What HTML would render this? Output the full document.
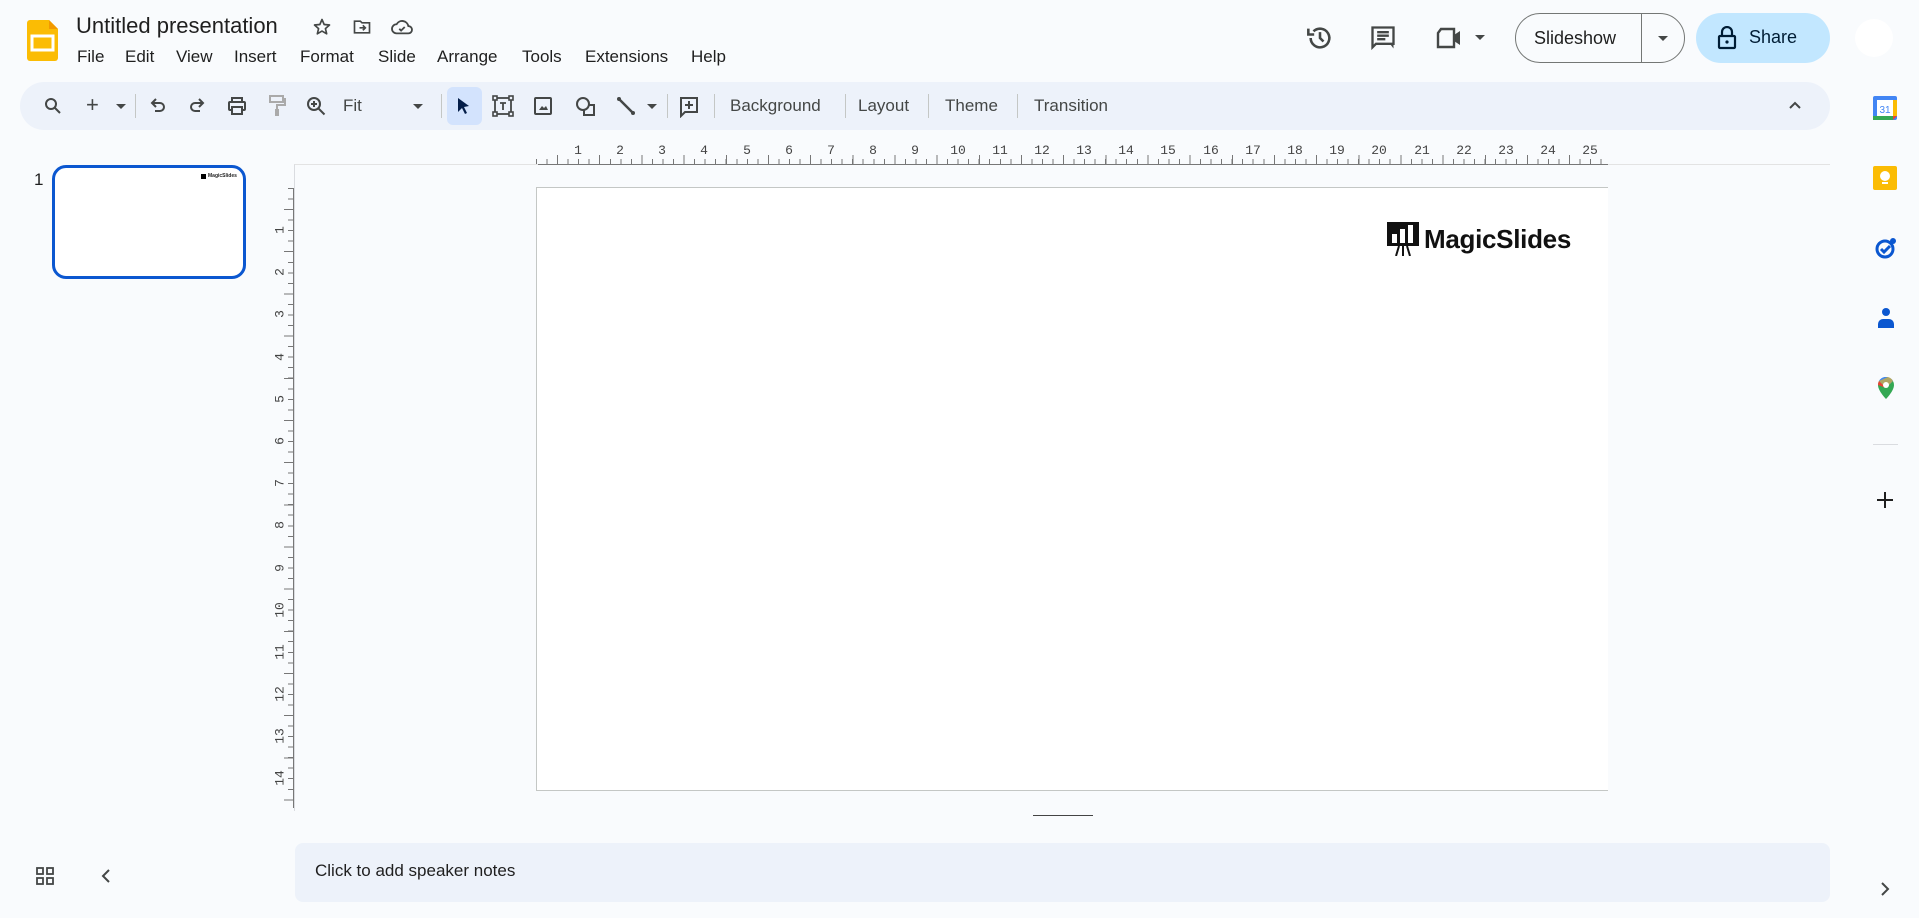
<!DOCTYPE html>
<html><head><meta charset="utf-8"><style>
*{margin:0;padding:0;box-sizing:border-box}
body{width:1919px;height:918px;background:#f9fbfd;font-family:"Liberation Sans",Arial,sans-serif;color:#1f1f1f;position:relative;overflow:hidden}
.a{position:absolute}
.menu span{position:absolute;top:47px;font-size:17px;color:#1f1f1f}
.tb{left:20px;top:82px;width:1810px;height:48px;background:#edf2fa;border-radius:24px}
.tbt{position:absolute;top:96px;font-size:17px;color:#444746}
.sep{position:absolute;top:94px;width:1px;height:24px;background:#c4c7c5}
.ic{position:absolute}
.hn{position:absolute;top:143px;font-family:"Liberation Mono",monospace;font-size:13px;color:#444;transform:translateX(-50%)}
.vn{position:absolute;left:276px;font-family:"Liberation Mono",monospace;font-size:13px;color:#444;transform:translateY(-50%) rotate(-90deg)}
</style></head><body>
<!-- logo -->
<svg class="a" style="left:27px;top:20px" width="31" height="41" viewBox="0 0 31 41"><path d="M3 0h19l9 9v29a3 3 0 0 1-3 3H3a3 3 0 0 1-3-3V3a3 3 0 0 1 3-3z" fill="#fbbc04"/><path d="M22 0l9 9h-9z" fill="#f29900"/><rect x="5" y="16" width="21" height="14" fill="none" stroke="#fff" stroke-width="3"/></svg>
<div class="a" style="left:76px;top:13px;font-size:22px;color:#1f1f1f">Untitled presentation</div>
<svg class="a" style="left:312px;top:17px" width="20" height="20" viewBox="0 0 24 24"><path d="M12 3l2.6 6 6.4.6-4.9 4.3 1.5 6.3L12 16.9 6.4 20.2l1.5-6.3L3 9.6 9.4 9z" fill="none" stroke="#444746" stroke-width="2" stroke-linejoin="round"/></svg>
<svg class="a" style="left:352px;top:17px" width="20" height="20" viewBox="0 0 24 24"><path d="M3 5h7l2 2h9v12H3z" fill="none" stroke="#444746" stroke-width="2"/><path d="M9 13h7m-3-3l3 3-3 3" fill="none" stroke="#444746" stroke-width="2"/></svg>
<svg class="a" style="left:391px;top:17px" width="22" height="20" viewBox="0 0 24 22"><path d="M6 18a5 5 0 0 1 0-10 7 7 0 0 1 13 2 4 4 0 0 1 0 8z" fill="none" stroke="#444746" stroke-width="2"/><path d="M9 13l2 2 4-4" fill="none" stroke="#444746" stroke-width="2"/></svg>
<div class="menu">
<span style="left:77px">File</span><span style="left:125px">Edit</span><span style="left:176px">View</span><span style="left:234px">Insert</span><span style="left:300px">Format</span><span style="left:378px">Slide</span><span style="left:437px">Arrange</span><span style="left:522px">Tools</span><span style="left:585px">Extensions</span><span style="left:691px">Help</span>
</div>
<!-- top right -->
<svg class="a" style="left:1306px;top:24px" width="28" height="28" viewBox="0 0 24 24"><path d="M4 12a8 8 0 1 0 2.4-5.7" fill="none" stroke="#444746" stroke-width="2.2"/><path d="M2 4v5h5" fill="none" stroke="#444746" stroke-width="2.2"/><path d="M12 7v5l3 3" fill="none" stroke="#444746" stroke-width="2.2"/></svg>
<svg class="a" style="left:1369px;top:24px" width="28" height="28" viewBox="0 0 24 24"><path d="M3 3h18v14H6l-3 3z" fill="none" stroke="#444746" stroke-width="2"/><path d="M7 7h10M7 10h10M7 13h7" stroke="#444746" stroke-width="2"/><path d="M18 17h3v4z" fill="#444746"/></svg>
<svg class="a" style="left:1435px;top:25px" width="30" height="26" viewBox="0 0 30 26"><path d="M6 4h13v18H3V8z" fill="none" stroke="#444746" stroke-width="2.4"/><path d="M19 10l6-4v14l-6-4z" fill="#444746"/></svg>
<div class="a" style="left:1475px;top:35px;border-left:5px solid transparent;border-right:5px solid transparent;border-top:5px solid #444746"></div>
<div class="a" style="left:1515px;top:13px;width:170px;height:50px;border:1px solid #747775;border-radius:25px"></div>
<div class="a" style="left:1641px;top:13px;width:1px;height:50px;background:#747775"></div>
<div class="a" style="left:1534px;top:28px;font-size:18px;color:#1f1f1f">Slideshow</div>
<div class="a" style="left:1658px;top:36px;border-left:5px solid transparent;border-right:5px solid transparent;border-top:5px solid #444746"></div>
<div class="a" style="left:1696px;top:13px;width:134px;height:50px;background:#c2e7ff;border-radius:25px"></div>
<svg class="a" style="left:1717px;top:26px" width="20" height="24" viewBox="0 0 20 24"><rect x="2" y="10" width="16" height="12" rx="1" fill="none" stroke="#001d35" stroke-width="2.2"/><path d="M5 10V6a5 5 0 0 1 10 0v4" fill="none" stroke="#001d35" stroke-width="2.2"/><circle cx="10" cy="16" r="1.6" fill="#001d35"/></svg>
<div class="a" style="left:1749px;top:27px;font-size:18px;color:#001d35">Share</div>
<div class="a" style="left:1855px;top:19px;width:38px;height:38px;border-radius:50%;background:#fff"></div>
<!-- toolbar -->
<div class="a tb"></div>
<div class="a" style="left:447px;top:87px;width:35px;height:38px;background:#d3e3fd;border-radius:6px"></div>
<svg class="ic" style="left:44px;top:97px" width="18" height="18" viewBox="0 0 18 18"><circle cx="7" cy="7" r="5" fill="none" stroke="#444746" stroke-width="2"/><path d="M11 11l5 5" stroke="#444746" stroke-width="2"/></svg>
<div class="tbt" style="left:86px;top:92px;font-size:22px">+</div>
<div class="a" style="left:116px;top:104px;border-left:5px solid transparent;border-right:5px solid transparent;border-top:5px solid #444746"></div>
<div class="sep" style="left:135px"></div>
<svg class="ic" style="left:149px;top:97px" width="18" height="18" viewBox="0 0 18 18"><path d="M4 6h7a4 4 0 0 1 0 8H6" fill="none" stroke="#444746" stroke-width="2"/><path d="M7 2L3 6l4 4" fill="none" stroke="#444746" stroke-width="2"/></svg>
<svg class="ic" style="left:188px;top:97px" width="18" height="18" viewBox="0 0 18 18"><path d="M14 6H7a4 4 0 0 0 0 8h5" fill="none" stroke="#444746" stroke-width="2"/><path d="M11 2l4 4-4 4" fill="none" stroke="#444746" stroke-width="2"/></svg>
<svg class="ic" style="left:227px;top:96px" width="20" height="20" viewBox="0 0 20 20"><rect x="5" y="2" width="10" height="4" fill="none" stroke="#444746" stroke-width="2"/><rect x="2" y="6" width="16" height="8" rx="1" fill="none" stroke="#444746" stroke-width="2"/><rect x="5" y="11" width="10" height="7" fill="#edf2fa" stroke="#444746" stroke-width="2"/></svg>
<svg class="ic" style="left:268px;top:95px" width="18" height="22" viewBox="0 0 18 22"><rect x="2" y="1" width="13" height="6" fill="none" stroke="#aaa" stroke-width="2"/><path d="M15 4h2v6H9v4" fill="none" stroke="#aaa" stroke-width="2"/><rect x="7" y="14" width="4" height="7" fill="#aaa"/></svg>
<svg class="ic" style="left:306px;top:96px" width="20" height="20" viewBox="0 0 20 20"><circle cx="8" cy="8" r="6" fill="none" stroke="#444746" stroke-width="2"/><path d="M12.5 12.5l6 6M8 5v6M5 8h6" stroke="#444746" stroke-width="2"/></svg>
<div class="tbt" style="left:343px">Fit</div>
<div class="a" style="left:413px;top:104px;border-left:5px solid transparent;border-right:5px solid transparent;border-top:5px solid #444746"></div>
<div class="sep" style="left:441px"></div>
<svg class="ic" style="left:455px;top:96px" width="18" height="20" viewBox="0 0 18 20"><path d="M3 2l11 8-5 1 3 6-2 1-3-6-4 4z" fill="#041e49"/></svg>
<svg class="ic" style="left:492px;top:95px" width="22" height="22" viewBox="0 0 22 22"><rect x="3" y="3" width="16" height="16" fill="none" stroke="#444746" stroke-width="1.8"/><rect x="1" y="1" width="4" height="4" fill="#edf2fa" stroke="#444746" stroke-width="1.6"/><rect x="17" y="1" width="4" height="4" fill="#edf2fa" stroke="#444746" stroke-width="1.6"/><rect x="1" y="17" width="4" height="4" fill="#edf2fa" stroke="#444746" stroke-width="1.6"/><rect x="17" y="17" width="4" height="4" fill="#edf2fa" stroke="#444746" stroke-width="1.6"/><path d="M8 8h6M11 8v7" stroke="#444746" stroke-width="1.8"/></svg>
<svg class="ic" style="left:534px;top:97px" width="18" height="18" viewBox="0 0 18 18"><rect x="1" y="1" width="16" height="16" rx="1" fill="none" stroke="#444746" stroke-width="2"/><path d="M5 13l3-4 2 2 2-2 2 4z" fill="#444746"/></svg>
<svg class="ic" style="left:575px;top:96px" width="22" height="22" viewBox="0 0 22 22"><circle cx="8" cy="8" r="6" fill="none" stroke="#444746" stroke-width="2"/><path d="M14 9h5v10H9v-5" fill="none" stroke="#444746" stroke-width="2"/></svg>
<svg class="ic" style="left:616px;top:96px" width="20" height="20" viewBox="0 0 20 20"><path d="M3 3l14 14" stroke="#444746" stroke-width="2.5"/><circle cx="3" cy="3" r="2" fill="#444746"/><circle cx="17" cy="17" r="2" fill="#444746"/></svg>
<div class="a" style="left:647px;top:104px;border-left:5px solid transparent;border-right:5px solid transparent;border-top:5px solid #444746"></div>
<div class="sep" style="left:667px"></div>
<svg class="ic" style="left:679px;top:96px" width="20" height="22" viewBox="0 0 20 22"><path d="M2 2h16v14H6l-4 4z" fill="none" stroke="#444746" stroke-width="2"/><path d="M10 5v8M6 9h8" stroke="#444746" stroke-width="2"/></svg>
<div class="sep" style="left:714px"></div>
<div class="tbt" style="left:730px">Background</div>
<div class="sep" style="left:845px"></div>
<div class="tbt" style="left:858px">Layout</div>
<div class="sep" style="left:928px"></div>
<div class="tbt" style="left:945px">Theme</div>
<div class="sep" style="left:1017px"></div>
<div class="tbt" style="left:1034px">Transition</div>
<svg class="ic" style="left:1788px;top:100px" width="14" height="10" viewBox="0 0 14 10"><path d="M2 8l5-5 5 5" fill="none" stroke="#444746" stroke-width="2"/></svg>
<!-- thumbnail -->
<div class="a" style="left:34px;top:170px;font-size:17px">1</div>
<div class="a" style="left:52px;top:165px;width:194px;height:114px;border:3px solid #0b57d0;border-radius:14px;background:#fff"></div>
<div class="a" style="left:201px;top:174px;width:5px;height:5px;background:#000"></div>
<div class="a" style="left:208px;top:173px;font-size:5px;font-weight:bold">MagicSlides</div>
<!-- canvas area -->
<div class="a" style="left:294px;top:164px;width:1536px;height:647px;border-left:1px solid #dadce0;border-top:1px solid #e3e3e3"></div>
<!-- horizontal ruler -->
<div class="a" style="left:538px;top:164px;width:1070px;height:1px;background:#777"></div>
<div class="a" style="left:536px;top:159px;width:1072px;height:5px;background:repeating-linear-gradient(90deg,#777 0 1px,transparent 1px 10.54px)"></div>
<div class="a" style="left:536px;top:155px;width:1072px;height:9px;background:repeating-linear-gradient(90deg,transparent 0 21.08px,#777 21.08px 22.08px,transparent 22.08px 42.17px)"></div>
<div class="hn" style="left:578px">1</div><div class="hn" style="left:620px">2</div><div class="hn" style="left:662px">3</div><div class="hn" style="left:704px">4</div><div class="hn" style="left:747px">5</div><div class="hn" style="left:789px">6</div><div class="hn" style="left:831px">7</div><div class="hn" style="left:873px">8</div><div class="hn" style="left:915px">9</div><div class="hn" style="left:958px">10</div><div class="hn" style="left:1000px">11</div><div class="hn" style="left:1042px">12</div><div class="hn" style="left:1084px">13</div><div class="hn" style="left:1126px">14</div><div class="hn" style="left:1168px">15</div><div class="hn" style="left:1211px">16</div><div class="hn" style="left:1253px">17</div><div class="hn" style="left:1295px">18</div><div class="hn" style="left:1337px">19</div><div class="hn" style="left:1379px">20</div><div class="hn" style="left:1422px">21</div><div class="hn" style="left:1464px">22</div><div class="hn" style="left:1506px">23</div><div class="hn" style="left:1548px">24</div><div class="hn" style="left:1590px">25</div>
<!-- vertical ruler -->
<div class="a" style="left:293px;top:188px;width:1px;height:620px;background:#777"></div>
<div class="a" style="left:288px;top:188px;width:5px;height:620px;background:repeating-linear-gradient(180deg,#777 0 1px,transparent 1px 10.54px)"></div>
<div class="a" style="left:284px;top:188px;width:9px;height:620px;background:repeating-linear-gradient(180deg,transparent 0 21.08px,#777 21.08px 22.08px,transparent 22.08px 42.17px)"></div>
<div class="vn" style="top:230px">1</div><div class="vn" style="top:272px">2</div><div class="vn" style="top:314px">3</div><div class="vn" style="top:357px">4</div><div class="vn" style="top:399px">5</div><div class="vn" style="top:441px">6</div><div class="vn" style="top:483px">7</div><div class="vn" style="top:525px">8</div><div class="vn" style="top:568px">9</div><div class="vn" style="top:610px;left:272px">10</div><div class="vn" style="top:652px;left:272px">11</div><div class="vn" style="top:694px;left:272px">12</div><div class="vn" style="top:736px;left:272px">13</div><div class="vn" style="top:778px;left:272px">14</div>
<!-- slide -->
<div class="a" style="left:536px;top:187px;width:1072px;height:604px;background:#fff;border:1px solid #c4c7c5;border-right:none"></div>
<svg class="a" style="left:1387px;top:222px" width="32" height="34" viewBox="0 0 32 34"><rect x="0" y="0" width="32" height="24" fill="#111"/><rect x="5" y="12" width="5" height="9" fill="#fff"/><rect x="13" y="7" width="5" height="14" fill="#fff"/><rect x="21" y="3" width="5" height="18" fill="#fff"/><path d="M12 24l-3 10M16 24v10M20 24l3 10" stroke="#111" stroke-width="2"/></svg>
<div class="a" style="left:1424px;top:224px;font-size:26px;font-weight:bold;color:#111;letter-spacing:-0.3px">MagicSlides</div>
<div class="a" style="left:1033px;top:815px;width:60px;height:1px;background:#444"></div>
<!-- notes -->
<div class="a" style="left:295px;top:843px;width:1535px;height:59px;background:#edf2fa;border-radius:8px"></div>
<div class="a" style="left:315px;top:861px;font-size:17px;color:#1f1f1f">Click to add speaker notes</div>
<!-- bottom left -->
<svg class="a" style="left:36px;top:867px" width="18" height="18" viewBox="0 0 18 18"><g fill="none" stroke="#444746" stroke-width="1.8"><rect x="1" y="1" width="6" height="6"/><rect x="11" y="1" width="6" height="6"/><rect x="1" y="11" width="6" height="6"/><rect x="11" y="11" width="6" height="6"/></g></svg>
<svg class="a" style="left:100px;top:869px" width="12" height="14" viewBox="0 0 12 14"><path d="M9 1L3 7l6 6" fill="none" stroke="#444746" stroke-width="2"/></svg>
<!-- sidebar -->
<svg class="a" style="left:1873px;top:96px" width="24" height="24" viewBox="0 0 24 24"><rect x="0" y="0" width="24" height="24" rx="2" fill="#4285f4"/><rect x="4" y="4" width="16" height="16" fill="#fff"/><rect x="20" y="4" width="4" height="16" fill="#fbbc04"/><rect x="0" y="20" width="20" height="4" fill="#34a853"/><path d="M20 20h4l-4 4z" fill="#ea4335"/><text x="12" y="17" font-size="10" text-anchor="middle" fill="#4285f4" font-family="Liberation Sans">31</text></svg>
<svg class="a" style="left:1873px;top:166px" width="24" height="24" viewBox="0 0 24 24"><rect width="24" height="24" rx="2" fill="#fbbc04"/><circle cx="12" cy="10" r="5" fill="#fff"/><rect x="9" y="16" width="6" height="2" fill="#fff"/></svg>
<svg class="a" style="left:1874px;top:236px" width="24" height="24" viewBox="0 0 24 24"><circle cx="11" cy="13" r="8" fill="none" stroke="#0b57d0" stroke-width="3"/><path d="M7 13l3 3 6-6" fill="none" stroke="#0b57d0" stroke-width="3"/><circle cx="19" cy="5" r="3" fill="#0b57d0"/></svg>
<svg class="a" style="left:1876px;top:306px" width="20" height="24" viewBox="0 0 20 24"><circle cx="10" cy="6" r="4" fill="#0b57d0"/><path d="M2 22v-4a5 5 0 0 1 5-5h6a5 5 0 0 1 5 5v4z" fill="#0b57d0"/></svg>
<svg class="a" style="left:1877px;top:376px" width="18" height="24" viewBox="0 0 18 24"><path d="M9 1a8 8 0 0 1 8 8c0 6-8 14-8 14S1 15 1 9a8 8 0 0 1 8-8z" fill="#34a853"/><path d="M9 1a8 8 0 0 0-7 4l7 7 7-7a8 8 0 0 0-7-4z" fill="#4285f4"/><path d="M2 5a8 8 0 0 0-1 4l8 3z" fill="#ea4335"/><path d="M2 5l7 7 7-7a8 8 0 0 0-5-4z" fill="#fbbc04" opacity=".6"/><circle cx="9" cy="9" r="3" fill="#fff"/></svg>
<div class="a" style="left:1873px;top:444px;width:25px;height:1px;background:#dadce0"></div>
<svg class="a" style="left:1876px;top:491px" width="18" height="18" viewBox="0 0 18 18"><path d="M9 1v16M1 9h16" stroke="#1f1f1f" stroke-width="2"/></svg>
<svg class="a" style="left:1880px;top:882px" width="10" height="14" viewBox="0 0 10 14"><path d="M2 1l6 6-6 6" fill="none" stroke="#444746" stroke-width="2"/></svg>
</body></html>
